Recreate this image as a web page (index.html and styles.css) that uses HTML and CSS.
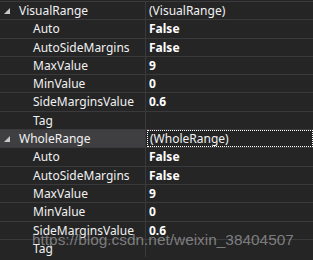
FILE: index.html
```html
<!DOCTYPE html>
<html>
<head>
<link rel="stylesheet" href="styles.css">
</head>
<body class="in_body">
  <div class="grid">
    <div class="row cat">
      <div class="lab"><svg class="tri" width="7" height="7" viewBox="0 0 7 7"><polygon points="6,0 6,6 0,6" fill="#c8c8c8"/></svg>VisualRange</div>
      <div class="val">(VisualRange)</div>
    </div>
    <div class="row"><div class="lab sub">Auto</div><div class="val b">False</div></div>
    <div class="row"><div class="lab sub">AutoSideMargins</div><div class="val b">False</div></div>
    <div class="row"><div class="lab sub">MaxValue</div><div class="val b">9</div></div>
    <div class="row"><div class="lab sub">MinValue</div><div class="val b">0</div></div>
    <div class="row"><div class="lab sub">SideMarginsValue</div><div class="val b">0.6</div></div>
    <div class="row"><div class="lab sub">Tag</div><div class="val"></div></div>
    <div class="row cat sel">
      <div class="lab"><svg class="tri" width="7" height="7" viewBox="0 0 7 7"><polygon points="6,0 6,6 0,6" fill="#c8c8c8"/></svg>WholeRange</div>
      <div class="val"><span class="focus">(WholeRange)</span></div>
    </div>
    <div class="row"><div class="lab sub">Auto</div><div class="val b">False</div></div>
    <div class="row"><div class="lab sub">AutoSideMargins</div><div class="val b">False</div></div>
    <div class="row"><div class="lab sub">MaxValue</div><div class="val b">9</div></div>
    <div class="row"><div class="lab sub">MinValue</div><div class="val b">0</div></div>
    <div class="row"><div class="lab sub">SideMarginsValue</div><div class="val b">0.6</div></div>
    <div class="row"><div class="lab sub">Tag</div><div class="val"></div></div>
  </div>
  <div class="mark">https://blog.csdn.net/weixin_38404507</div>
</body>
</html>
```
FILE: styles.css
```css
.in_body
{
  margin:0;
  width:313px;
  height:260px;
  overflow:hidden;
  position:relative;
  background-color:#252526;
  font-family:"Noto Sans", "Open Sans", sans-serif;
  font-size:12px;
  color:#f1f1f1;
}
.grid
{
  padding-top:1px;
}
.row
{
  display:flex;
  height:17.3px;
  border-top:1px solid #3a3a3c;
  line-height:17px;
}
.lab
{
  width:146px;
  border-right:1px solid #3a3a3c;
  padding-left:19px;
  box-sizing:border-box;
  white-space:nowrap;
  position:relative;
}
.sub
{
  padding-left:33px;
}
.tri
{
  position:absolute;
  left:4px;
  top:6px;
}
.sel .lab
{
  background-color:#3f3f41;
}
.val
{
  flex:1;
  padding-left:3px;
  white-space:nowrap;
}
.b
{
  font-weight:bold;
  color:#ffffff;
}
.focus
{
  display:block;
  margin-left:-2px;
  padding-left:2px;
  height:15px;
  line-height:15px;
  border:1px dotted #ffffff;
}
.mark
{
  position:absolute;
  left:32px;
  top:231px;
  font-family:"Liberation Sans", Arial, sans-serif;
  font-size:15.4px;
  color:rgba(200,200,200,0.55);
  white-space:nowrap;
}
```
